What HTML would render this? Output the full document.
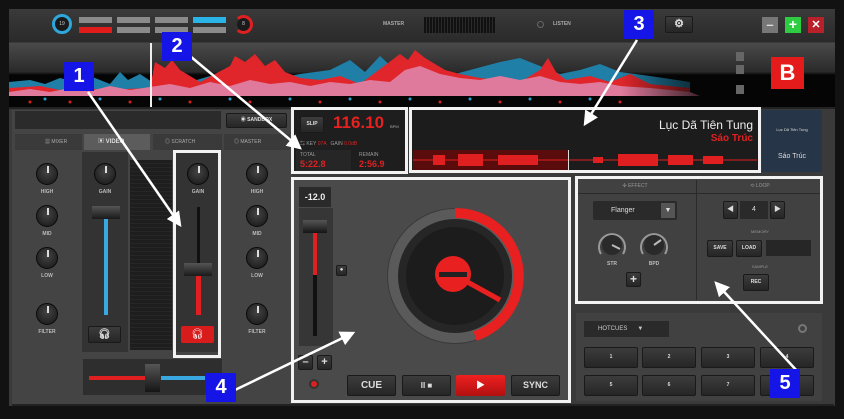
<!DOCTYPE html>
<html><head><meta charset="utf-8"><style>
*{margin:0;padding:0;box-sizing:border-box}
body{width:844px;height:419px;background:#121212;position:relative;overflow:hidden;font-family:"Liberation Sans","Noto Sans CJK SC",sans-serif;color:#ccc}
.a{position:absolute}
.btn{position:absolute;background:linear-gradient(#3c3c3c,#262626);border:1px solid #1a1a1a;border-radius:2px;color:#ddd;font-size:9px;font-weight:bold;text-align:center}
.lbl{position:absolute;font-size:5px;color:#bbb;font-weight:bold;text-align:center;width:40px}
.knob{position:absolute;width:22px;height:22px;border-radius:50%;background:radial-gradient(circle at 50% 40%,#444,#151515);border:1px solid #0a0a0a}
.knob:after{content:"";position:absolute;left:10px;top:2px;width:2px;height:7px;background:#ddd}
.box{position:absolute;border:3px solid #f2f2f2}
.num{position:absolute;background:#1515e8;color:#fff;font-weight:bold;font-size:20px;text-align:center;line-height:29px;width:30px;height:29px}
</style></head><body>
<!-- app frame -->
<div class="a" style="left:9px;top:9px;width:826px;height:397px;background:#3a3a3a"></div>
<!-- top bar -->
<div class="a" style="left:9px;top:9px;width:826px;height:33px;background:linear-gradient(#3a3a3a,#2a2a2a)"></div>
<div class="a" style="left:52px;top:14px;width:20px;height:20px;border-radius:50%;border:3px solid #2ea8dc;background:#1a1a1a;font-size:5px;color:#ccc;text-align:center;line-height:14px">19</div>
<div class="a" style="left:79px;top:17px;width:33px;height:6px;background:#8a8a8a"></div>
<div class="a" style="left:79px;top:27px;width:33px;height:6px;background:#e21b1b"></div>
<div class="a" style="left:117px;top:17px;width:33px;height:6px;background:#8a8a8a"></div>
<div class="a" style="left:117px;top:27px;width:33px;height:6px;background:#8a8a8a"></div>
<div class="a" style="left:155px;top:17px;width:33px;height:6px;background:#8a8a8a"></div>
<div class="a" style="left:155px;top:27px;width:33px;height:6px;background:#8a8a8a"></div>
<div class="a" style="left:193px;top:17px;width:33px;height:6px;background:#2ab4e8"></div>
<div class="a" style="left:193px;top:27px;width:33px;height:6px;background:#8a8a8a"></div>
<div class="a" style="left:234px;top:15px;width:19px;height:19px;border-radius:50%;border:3px solid #e02020;border-left-color:#333;background:#1a1a1a;font-size:5px;color:#ccc;text-align:center;line-height:13px">8</div>
<div class="a" style="left:383px;top:21px;font-size:5px;color:#aaa;font-weight:bold">MASTER</div>
<div class="a" style="left:424px;top:17px;width:71px;height:16px;background:repeating-linear-gradient(90deg,#111 0 2px,#2a2a2a 2px 3px);"></div>
<div class="a" style="left:537px;top:21px;width:7px;height:7px;border-radius:50%;border:1px solid #666"></div>
<div class="a" style="left:553px;top:21px;font-size:5px;color:#aaa;font-weight:bold">LISTEN</div>
<div class="btn" style="left:665px;top:16px;width:28px;height:17px;font-size:11px;line-height:14px">⚙</div>
<div class="a" style="left:762px;top:17px;width:16px;height:16px;background:#777;color:#ddd;font-size:13px;text-align:center;line-height:15px;font-weight:bold">–</div>
<div class="a" style="left:785px;top:17px;width:16px;height:16px;background:#2ecc40;color:#fff;font-size:14px;text-align:center;line-height:15px;font-weight:bold">+</div>
<div class="a" style="left:808px;top:17px;width:16px;height:16px;background:#b8202a;color:#fff;font-size:11px;text-align:center;line-height:16px;font-weight:bold">✕</div>
<!-- waveform -->
<div class="a" style="left:9px;top:43px;width:826px;height:64px;background:linear-gradient(#4a4a4a,#2a2a2a 45%,#050505 50%,#050505)"></div>
<svg class="a" style="left:9px;top:43px" width="720" height="64" viewBox="9 43 720 64">
<defs><linearGradient id="f" x1="0" x2="1"><stop offset="0.85" stop-color="#fff"/><stop offset="1" stop-color="#000"/></linearGradient><mask id="m"><rect x="9" y="43" width="720" height="64" fill="url(#f)"/></mask></defs>
<g mask="url(#m)">
<polygon fill="#1f7fa6" points="9,82 30,80 45,84 60,78 75,82 90,76 110,84 120,72 128,80 140,74 155,84 170,78 190,82 210,76 230,80 250,72 270,80 300,74 330,70 350,60 365,72 380,56 395,70 420,64 440,78 470,70 500,62 520,58 540,66 560,74 580,70 600,64 620,72 650,76 690,82 690,96 9,96"/>
<polygon fill="#e0262b" points="9,88 40,86 60,90 80,86 100,90 150,88 155,62 165,68 172,60 180,70 190,76 200,82 230,66 235,56 245,62 255,54 265,66 275,60 285,72 300,78 320,80 340,76 360,84 400,54 408,60 415,50 425,58 435,64 445,70 460,74 480,78 500,80 520,82 540,70 548,58 556,72 566,80 590,76 610,82 630,74 650,84 690,88 690,96 9,96"/>
<polygon fill="#e07a9c" points="9,92 30,89 50,92 70,88 90,91 110,86 130,90 150,87 170,84 190,88 210,82 230,86 250,80 270,84 290,82 310,86 330,82 350,84 370,80 390,82 405,70 420,66 440,74 460,78 480,80 500,76 520,80 540,76 560,82 580,84 600,82 620,86 650,88 690,92 700,96 9,96"/>
</g>
<g fill="#d02020"><circle cx="30" cy="102" r="1.5"/><circle cx="70" cy="102" r="1.5"/><circle cx="130" cy="102" r="1.5"/><circle cx="190" cy="102" r="1.5"/><circle cx="250" cy="102" r="1.5"/><circle cx="320" cy="102" r="1.5"/><circle cx="380" cy="102" r="1.5"/><circle cx="440" cy="102" r="1.5"/><circle cx="500" cy="102" r="1.5"/><circle cx="560" cy="102" r="1.5"/><circle cx="620" cy="102" r="1.5"/></g>
<g fill="#2a9fd0"><circle cx="45" cy="99" r="1.5"/><circle cx="100" cy="99" r="1.5"/><circle cx="160" cy="99" r="1.5"/><circle cx="230" cy="99" r="1.5"/><circle cx="290" cy="99" r="1.5"/><circle cx="350" cy="99" r="1.5"/><circle cx="410" cy="99" r="1.5"/><circle cx="470" cy="99" r="1.5"/><circle cx="530" cy="99" r="1.5"/><circle cx="590" cy="99" r="1.5"/></g>
<rect x="150" y="43" width="2" height="64" fill="#eee"/>
</svg>
<div class="a" style="left:736px;top:52px;width:8px;height:9px;background:#666"></div>
<div class="a" style="left:736px;top:65px;width:8px;height:9px;background:#666"></div>
<div class="a" style="left:736px;top:85px;width:8px;height:9px;background:#666"></div>
<div class="a" style="left:771px;top:57px;width:33px;height:32px;background:#e51a1a;color:#fff;font-size:22px;font-weight:bold;text-align:center;line-height:32px">B</div>
<div class="a" style="left:9px;top:107px;width:826px;height:2px;background:#222"></div>
<!-- left mixer panel -->
<div class="a" style="left:12px;top:110px;width:280px;height:295px;background:#444"></div>
<div class="a" style="left:15px;top:111px;width:206px;height:18px;background:#2b2b2b"></div>
<div class="btn" style="left:226px;top:113px;width:61px;height:15px;font-size:5px;line-height:13px">◉ SANDBOX</div>
<div class="a" style="left:15px;top:134px;width:67px;height:16px;background:#3a3a3a;font-size:5px;line-height:16px;padding-left:30px;color:#aaa">▦ MIXER</div>
<div class="a" style="left:84px;top:134px;width:66px;height:16px;background:#5c5c5c;font-size:6px;line-height:16px;padding-left:14px;color:#ddd;font-weight:bold">▣ VIDEO</div>
<div class="a" style="left:153px;top:134px;width:69px;height:16px;background:#3a3a3a;font-size:5px;line-height:16px;padding-left:12px;color:#aaa">◎ SCRATCH</div>
<div class="a" style="left:224px;top:134px;width:66px;height:16px;background:#3a3a3a;font-size:5px;line-height:16px;padding-left:10px;color:#aaa">◎ MASTER</div>
<!-- channel strips -->
<div class="a" style="left:82px;top:152px;width:46px;height:200px;background:#333"></div>
<div class="a" style="left:130px;top:160px;width:42px;height:190px;background:repeating-linear-gradient(#1e1e1e 0 3px,#262626 3px 4px)"></div>
<div class="a" style="left:173px;top:152px;width:48px;height:200px;background:#333"></div>
<div class="knob" style="left:36px;top:163px"></div><div class="lbl" style="left:27px;top:189px">HIGH</div>
<div class="knob" style="left:36px;top:205px"></div><div class="lbl" style="left:27px;top:231px">MID</div>
<div class="knob" style="left:36px;top:247px"></div><div class="lbl" style="left:27px;top:273px">LOW</div>
<div class="knob" style="left:36px;top:303px"></div><div class="lbl" style="left:27px;top:329px">FILTER</div>
<div class="knob" style="left:246px;top:163px"></div><div class="lbl" style="left:237px;top:189px">HIGH</div>
<div class="knob" style="left:246px;top:205px"></div><div class="lbl" style="left:237px;top:231px">MID</div>
<div class="knob" style="left:246px;top:247px"></div><div class="lbl" style="left:237px;top:273px">LOW</div>
<div class="knob" style="left:246px;top:303px"></div><div class="lbl" style="left:237px;top:329px">FILTER</div>
<div class="knob" style="left:94px;top:163px"></div><div class="lbl" style="left:85px;top:189px">GAIN</div>
<div class="knob" style="left:187px;top:163px"></div><div class="lbl" style="left:178px;top:189px">GAIN</div>
<div class="a" style="left:104px;top:215px;width:4px;height:100px;background:#3aa8e0"></div>
<div class="a" style="left:92px;top:206px;width:28px;height:13px;background:linear-gradient(#555,#1a1a1a)"></div>
<div class="btn" style="left:88px;top:326px;width:33px;height:17px;font-size:10px;line-height:15px">🎧︎</div>
<div class="a" style="left:197px;top:207px;width:3px;height:60px;background:#111"></div>
<div class="a" style="left:196px;top:275px;width:5px;height:40px;background:#e02020"></div>
<div class="a" style="left:184px;top:263px;width:28px;height:13px;background:linear-gradient(#555,#1a1a1a)"></div>
<div class="a" style="left:181px;top:326px;width:33px;height:17px;background:#d81c1c;border-radius:2px;color:#fff;font-size:10px;text-align:center;line-height:17px">🎧︎</div>
<!-- crossfader -->
<div class="a" style="left:83px;top:359px;width:139px;height:36px;background:#2e2e2e"></div>
<div class="a" style="left:89px;top:376px;width:56px;height:4px;background:#e02020"></div>
<div class="a" style="left:161px;top:376px;width:44px;height:4px;background:#3aa8e0"></div>
<div class="a" style="left:145px;top:364px;width:15px;height:28px;background:linear-gradient(#555,#151515)"></div>
<div class="a" style="left:12px;top:404px;width:822px;height:2px;background:#222"></div>
<!-- BPM panel -->
<div class="a" style="left:292px;top:108px;width:115px;height:65px;background:#1e1e1e"></div>
<div class="btn" style="left:300px;top:116px;width:24px;height:17px;font-size:5px;line-height:15px">SLIP</div>
<div class="a" style="left:333px;top:113px;font-size:17px;font-weight:bold;color:#e82020">116.10</div>
<div class="a" style="left:390px;top:124px;font-size:4px;color:#aaa">BPM</div>
<div class="a" style="left:300px;top:140px;font-size:5px;color:#999">⇆ KEY <span style="color:#e02020">07A</span> &nbsp;&nbsp;GAIN <span style="color:#e02020">0.0dB</span></div>
<div class="a" style="left:296px;top:150px;width:55px;height:21px;background:#262626"></div>
<div class="a" style="left:300px;top:152px;font-size:5px;color:#999">TOTAL</div>
<div class="a" style="left:300px;top:159px;font-size:9px;color:#e02020;font-weight:bold">5:22.8</div>
<div class="a" style="left:359px;top:152px;font-size:5px;color:#999">REMAIN</div>
<div class="a" style="left:359px;top:159px;font-size:9px;color:#e02020;font-weight:bold">2:56.9</div>
<!-- title -->
<div class="a" style="left:410px;top:108px;width:350px;height:65px;background:#1c1c1c"></div>
<div class="a" style="left:410px;top:118px;width:343px;text-align:right;font-size:12px;color:#eee;font-family:'Liberation Sans','DejaVu Sans',sans-serif">Lục Dã Tiên Tung</div>
<div class="a" style="left:410px;top:133px;width:343px;text-align:right;font-size:10px;color:#e02020;font-weight:bold">Sáo Trúc</div>
<svg class="a" style="left:413px;top:150px" width="344" height="20"><rect width="155" height="20" fill="#5a0c0c"/><path d="M0 10H344" stroke="#e02020" stroke-width="1"/><g fill="#e02020"><rect x="20" y="5" width="12" height="10"/><rect x="45" y="4" width="25" height="12"/><rect x="85" y="5" width="40" height="10"/><rect x="180" y="7" width="10" height="6"/><rect x="205" y="4" width="40" height="12"/><rect x="255" y="5" width="25" height="10"/><rect x="290" y="6" width="20" height="8"/></g><rect x="155" y="0" width="1" height="20" fill="#ddd"/></svg>
<div class="a" style="left:762px;top:110px;width:60px;height:62px;background:#263548"></div>
<div class="a" style="left:762px;top:127px;width:60px;text-align:center;font-size:4px;color:#ddd">Lục Dã Tiên Tung</div>
<div class="a" style="left:762px;top:153px;width:60px;text-align:center;font-size:7px;color:#ddd">Sáo Trúc</div>
<!-- deck -->
<div class="a" style="left:292px;top:178px;width:278px;height:225px;background:#4a4a4a"></div>
<div class="a" style="left:299px;top:187px;width:32px;height:20px;background:#2a2a2a;color:#eee;font-size:9px;font-weight:bold;text-align:center;line-height:20px">-12.0</div>
<div class="a" style="left:299px;top:208px;width:34px;height:138px;background:#363636"></div>
<div class="a" style="left:313px;top:230px;width:4px;height:106px;background:#111"></div>
<div class="a" style="left:313px;top:230px;width:4px;height:45px;background:#e02020"></div>
<div class="a" style="left:303px;top:220px;width:24px;height:13px;background:linear-gradient(#555,#151515)"></div>
<div class="btn" style="left:336px;top:265px;width:11px;height:11px;font-size:6px;line-height:9px">●</div>
<div class="btn" style="left:298px;top:355px;width:15px;height:15px;font-size:11px;line-height:12px">–</div>
<div class="btn" style="left:317px;top:355px;width:15px;height:15px;font-size:11px;line-height:12px">+</div>
<div class="a" style="left:309px;top:379px;width:10px;height:10px;border-radius:50%;background:#e02020;border:2px solid #333"></div>
<svg class="a" style="left:383px;top:204px" width="145" height="145" viewBox="0 0 145 145">
<circle cx="72" cy="72" r="68" fill="#3a3a3a"/>
<circle cx="72" cy="72" r="62" fill="#262626" stroke="#5a5a5a" stroke-width="10"/>
<path d="M72 9 A63 63 0 0 1 92 132" fill="none" stroke="#e82020" stroke-width="10"/>
<circle cx="72" cy="72" r="49" fill="#1c1c1c"/>
<line x1="70" y1="70" x2="117" y2="96" stroke="#e82020" stroke-width="5"/>
<circle cx="70" cy="70" r="18" fill="#e82020"/>
<rect x="56" y="68" width="28" height="5" fill="#222"/>
</svg>
<div class="btn" style="left:347px;top:375px;width:49px;height:21px;font-size:10px;line-height:19px">CUE</div>
<div class="btn" style="left:402px;top:375px;width:49px;height:21px;font-size:8px;line-height:19px">II ■</div>
<div class="a" style="left:456px;top:375px;width:49px;height:21px;background:linear-gradient(#f02020,#b01010);border-radius:2px;color:#fff;font-size:9px;text-align:center;line-height:21px">▶</div>
<div class="btn" style="left:511px;top:375px;width:49px;height:21px;font-size:9px;line-height:19px">SYNC</div>
<!-- effects -->
<div class="a" style="left:576px;top:177px;width:246px;height:126px;background:#414141"></div>
<div class="a" style="left:576px;top:193px;width:246px;height:1px;background:#2a2a2a"></div>
<div class="a" style="left:696px;top:180px;width:1px;height:120px;background:#2a2a2a"></div>
<div class="a" style="left:580px;top:183px;width:110px;text-align:center;font-size:5px;color:#999">✣ EFFECT</div>
<div class="a" style="left:700px;top:183px;width:120px;text-align:center;font-size:5px;color:#999">⟲ LOOP</div>
<div class="a" style="left:593px;top:201px;width:84px;height:19px;background:#2a2a2a;border-radius:2px;font-size:7px;color:#ddd;line-height:19px;padding-left:18px">Flanger<span style="position:absolute;right:2px;top:2px;width:14px;height:15px;background:#555;text-align:center;line-height:15px">▼</span></div>
<svg class="a" style="left:595px;top:228px" width="80" height="40"><g fill="none" stroke="#999" stroke-width="2"><path d="M6 26A13 13 0 1 1 28 26"/><path d="M48 26A13 13 0 1 1 70 26"/></g><circle cx="17" cy="17" r="10" fill="#2a2a2a"/><circle cx="59" cy="17" r="10" fill="#2a2a2a"/><path d="M17 17L25 21M59 17L66 12" stroke="#bbb" stroke-width="2"/></svg>
<div class="lbl" style="left:592px;top:261px">STR</div><div class="lbl" style="left:634px;top:261px">BPD</div>
<div class="btn" style="left:626px;top:272px;width:15px;height:15px;font-size:12px;line-height:12px">+</div>
<div class="btn" style="left:723px;top:201px;width:15px;height:18px;font-size:7px;line-height:16px">◀</div>
<div class="a" style="left:740px;top:201px;width:28px;height:18px;background:#2a2a2a;font-size:7px;color:#ddd;text-align:center;line-height:18px">4</div>
<div class="btn" style="left:770px;top:201px;width:15px;height:18px;font-size:7px;line-height:16px">▶</div>
<div class="a" style="left:700px;top:229px;width:120px;text-align:center;font-size:4px;color:#999">MEMORY</div>
<div class="btn" style="left:707px;top:240px;width:26px;height:17px;font-size:5px;line-height:15px">SAVE</div>
<div class="btn" style="left:736px;top:240px;width:26px;height:17px;font-size:5px;line-height:15px">LOAD</div>
<div class="a" style="left:766px;top:240px;width:45px;height:16px;background:#262626"></div>
<div class="a" style="left:700px;top:264px;width:120px;text-align:center;font-size:4px;color:#999">SAMPLE</div>
<div class="btn" style="left:743px;top:274px;width:26px;height:17px;font-size:5px;line-height:15px">REC</div>
<!-- hotcues -->
<div class="a" style="left:576px;top:313px;width:246px;height:88px;background:#414141"></div>
<div class="a" style="left:584px;top:321px;width:85px;height:16px;background:#2a2a2a;font-size:6px;color:#ccc;line-height:16px;padding-left:14px">HOTCUES &nbsp;&nbsp;&nbsp;&nbsp;&nbsp;▼</div>
<div class="a" style="left:798px;top:324px;width:9px;height:9px;border-radius:50%;border:2px solid #777"></div>
<div class="btn" style="left:584px;top:347px;width:54px;height:21px;font-size:5px;line-height:19px">1</div>
<div class="btn" style="left:642px;top:347px;width:54px;height:21px;font-size:5px;line-height:19px">2</div>
<div class="btn" style="left:701px;top:347px;width:54px;height:21px;font-size:5px;line-height:19px">3</div>
<div class="btn" style="left:760px;top:347px;width:54px;height:21px;font-size:5px;line-height:19px">4</div>
<div class="btn" style="left:584px;top:375px;width:54px;height:21px;font-size:5px;line-height:19px">5</div>
<div class="btn" style="left:642px;top:375px;width:54px;height:21px;font-size:5px;line-height:19px">6</div>
<div class="btn" style="left:701px;top:375px;width:54px;height:21px;font-size:5px;line-height:19px">7</div>
<div class="btn" style="left:760px;top:375px;width:54px;height:21px;font-size:5px;line-height:19px">8</div>
<!-- annotation boxes -->
<div class="box" style="left:173px;top:150px;width:48px;height:208px"></div>
<div class="box" style="left:291px;top:107px;width:117px;height:67px"></div>
<div class="box" style="left:409px;top:107px;width:352px;height:66px"></div>
<div class="box" style="left:291px;top:177px;width:280px;height:226px"></div>
<div class="box" style="left:575px;top:176px;width:248px;height:128px"></div>
<svg class="a" style="left:0;top:0" width="844" height="419">
<defs><marker id="ar" markerWidth="6" markerHeight="6" refX="5" refY="3" orient="auto"><path d="M0 0L6 3L0 6z" fill="#fff"/></marker></defs>
<g stroke="#fff" stroke-width="2.5" marker-end="url(#ar)">
<line x1="88" y1="92" x2="180" y2="225"/>
<line x1="190" y1="56" x2="300" y2="148"/>
<line x1="637" y1="40" x2="585" y2="124"/>
<line x1="235" y1="390" x2="353" y2="333"/>
<line x1="798" y1="372" x2="716" y2="283"/>
</g></svg>
<div class="num" style="left:64px;top:62px">1</div>
<div class="num" style="left:162px;top:32px">2</div>
<div class="num" style="left:624px;top:10px">3</div>
<div class="num" style="left:206px;top:373px">4</div>
<div class="num" style="left:770px;top:369px">5</div>
</body></html>
